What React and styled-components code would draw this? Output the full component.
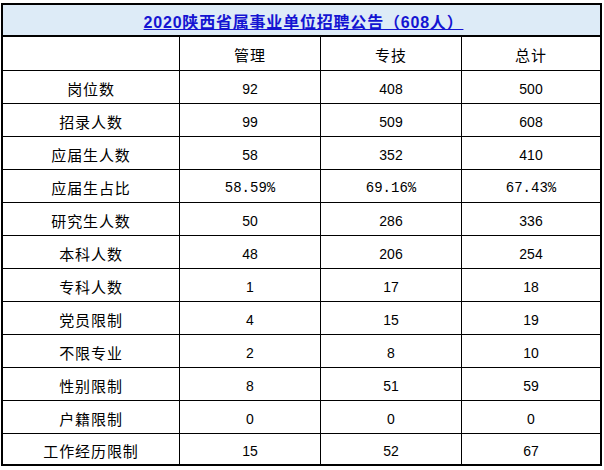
import React from "react";
import styled, { createGlobalStyle } from "styled-components";

const Global = createGlobalStyle`
  html, body { margin: 0; padding: 0; background: #fff; }
  body { font-family: "Liberation Sans", "Noto Sans CJK SC", sans-serif; color: #000; }
`;

const Page = styled.div`
  padding: 3px 0 0 1px;
`;

const Sheet = styled.div`
  width: 597px;
  border: 2px solid #000;
`;

const Title = styled.div`
  height: 32px;
  background: #ddebf7;
  border-bottom: 2px solid #000;
  display: flex;
  align-items: flex-end;
  justify-content: center;
  box-sizing: border-box;
  padding: 0 0 3px 4px;
`;

const TitleText = styled.span`
  font-family: "Liberation Sans", "Noto Sans CJK SC", sans-serif;
  font-weight: bold;
  font-size: 16px;
  letter-spacing: 0.8px;
  line-height: 18px;
  color: #1414d2;
  text-decoration: underline;
  text-underline-offset: 1px;
`;

const Row = styled.div`
  display: grid;
  grid-template-columns: 177px 141px 141px 138px;
  box-sizing: border-box;
  height: ${(p) => p.$h}px;
  border-bottom: ${(p) => (p.$last ? "none" : "1px solid #000")};
`;

const Cell = styled.div`
  display: flex;
  align-items: center;
  justify-content: center;
  padding-top: 3px;
  box-sizing: border-box;
  line-height: 18px;
  border-right: ${(p) => (p.$end ? "none" : "1px solid #000")};
  font-size: 14px;
  font-family: ${(p) =>
    p.$mono
      ? '"Liberation Mono", monospace'
      : p.$cjk
      ? '"Noto Sans CJK SC", sans-serif'
      : '"Liberation Sans", "Noto Sans CJK SC", sans-serif'};
  ${(p) => (p.$cjk ? "font-size: 15px; letter-spacing: 0.9px;" : "")}
  ${(p) => (p.$mono ? "font-size: 14px; letter-spacing: 0;" : "")}
`;

const rows = [
  ["岗位数", "92", "408", "500"],
  ["招录人数", "99", "509", "608"],
  ["应届生人数", "58", "352", "410"],
  ["应届生占比", "58.59%", "69.16%", "67.43%"],
  ["研究生人数", "50", "286", "336"],
  ["本科人数", "48", "206", "254"],
  ["专科人数", "1", "17", "18"],
  ["党员限制", "4", "15", "19"],
  ["不限专业", "2", "8", "10"],
  ["性别限制", "8", "51", "59"],
  ["户籍限制", "0", "0", "0"],
  ["工作经历限制", "15", "52", "67"],
];

export default function App() {
  return (
    <Page>
      <Global />
      <Sheet>
        <Title>
          <TitleText>2020陕西省属事业单位招聘公告（608人）</TitleText>
        </Title>
        <Row $h={34}>
          <Cell $cjk></Cell>
          <Cell $cjk>管理</Cell>
          <Cell $cjk>专技</Cell>
          <Cell $cjk $end>总计</Cell>
        </Row>
        {rows.map((r, i) => {
          const last = i === rows.length - 1;
          const pct = r[1].includes("%");
          return (
            <Row key={r[0]} $h={last ? 30 : 33} $last={last}>
              <Cell $cjk>{r[0]}</Cell>
              <Cell $mono={pct}>{r[1]}</Cell>
              <Cell $mono={pct}>{r[2]}</Cell>
              <Cell $mono={pct} $end>{r[3]}</Cell>
            </Row>
          );
        })}
      </Sheet>
    </Page>
  );
}
